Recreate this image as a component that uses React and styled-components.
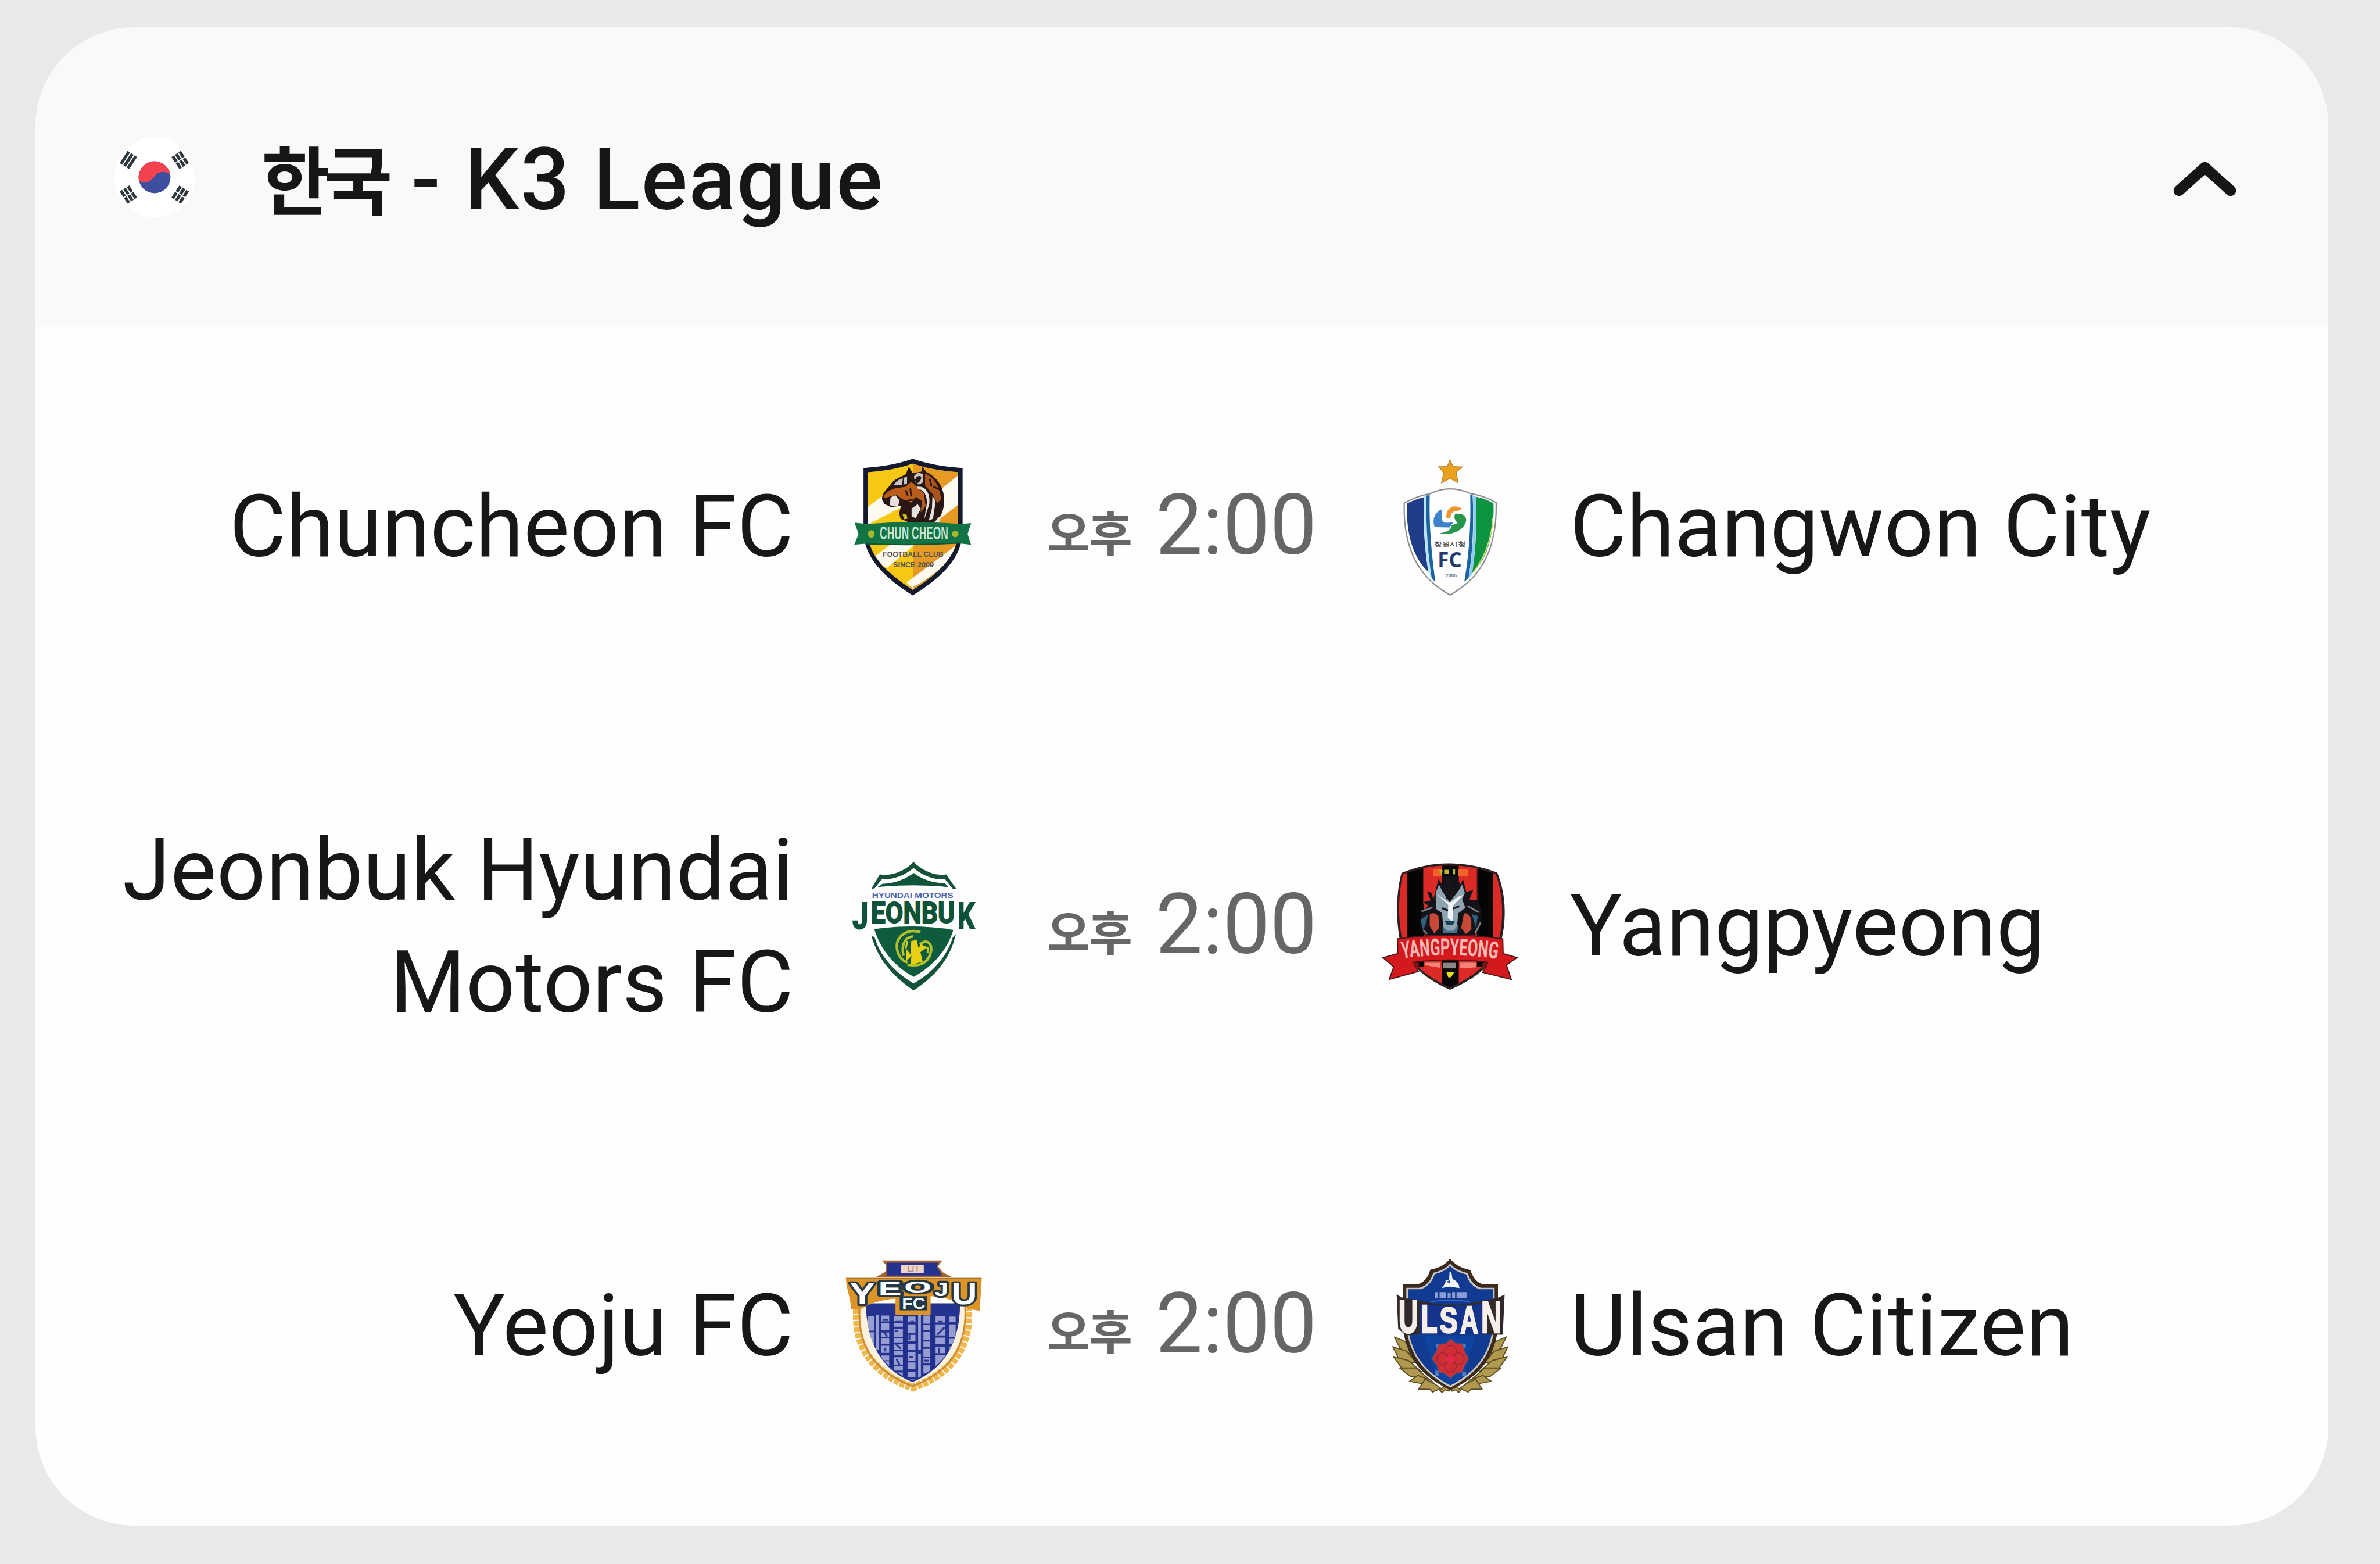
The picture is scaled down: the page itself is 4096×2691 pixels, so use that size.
import React from "react";
import styled, { createGlobalStyle } from "styled-components";

const GlobalStyle = createGlobalStyle`
  * {
    box-sizing: border-box;
  }
  body {
    margin: 0;
    background: #e9e9ea;
  }
`;

const Page = styled.main`
  width: 4096px;
  height: 2691px;
  padding: 47px 89px 66px 61px;
  background: #e9e9ea;
  font-family: Roboto, "Noto Sans CJK KR", sans-serif;
`;

const Card = styled.section`
  display: flex;
  flex-direction: column;
  height: 100%;
  border-radius: 170px;
  background: #fefefe;
  overflow: hidden;
`;

const CardHeader = styled.header`
  display: flex;
  align-items: center;
  flex: none;
  height: 516px;
  padding: 0 155px 0 136px;
  background: #f9f9fa;
`;

const Flag = styled.svg`
  flex: none;
  width: 138px;
  height: 138px;
`;

const LeagueTitle = styled.h1`
  flex: 1;
  display: flex;
  align-items: baseline;
  margin: 0 0 0 115px;
  padding-top: 4px;
  font-size: 149px;
  font-weight: 500;
  line-height: 180px;
  letter-spacing: 2px;
  color: #161616;
  white-space: pre;
`;

const Country = styled.span`
  margin-right: 3px;
  font-family: "Noto Sans CJK KR", sans-serif;
  font-size: 128px;
  font-weight: 700;
  letter-spacing: -10px;
`;

const Chevron = styled.svg`
  flex: none;
  width: 115px;
  height: 74px;
`;

const MatchList = styled.div`
  flex: 1;
  display: grid;
  grid-template-rows: repeat(3, 1fr);
`;

const MatchRow = styled.div`
  display: grid;
  grid-template-columns: 1fr 240px 684px 240px 1fr;
  align-items: center;
`;

const TeamName = styled.div`
  padding: 0 86px;
  font-size: 149px;
  line-height: 193px;
  letter-spacing: 0.4px;
  text-align: ${(props) => props.$align};
  color: #191616;
  white-space: pre-line;
`;

const Crest = styled.svg`
  display: block;
  width: 240px;
  height: 240px;
  overflow: visible;
`;

const Kickoff = styled.div`
  display: flex;
  align-items: baseline;
  justify-content: center;
  padding-top: 8px;
  font-size: 144px;
  line-height: 180px;
  color: #666668;
`;

const Meridiem = styled.span`
  margin-right: 42px;
  font-family: "Noto Sans CJK KR", sans-serif;
  font-size: 81px;
  font-weight: 700;
  letter-spacing: -2px;
  transform: translateY(-5px);
`;

const CrestText = styled.text`
  font-family: ${(props) => props.$font || '"Liberation Sans"'}, sans-serif;
  font-weight: 700;
`;

const Word = ({ width, ...props }) => (
  <CrestText textLength={width} lengthAdjust="spacingAndGlyphs" {...props} />
);

const Trigram = ({ x, y, angle, broken }) => (
  <g transform={`translate(${x} ${y}) rotate(${angle})`} stroke="#30383c" strokeWidth="5.4">
    <path d="M-13 -7.5H13M-13 0H13M-13 7.5H13" />
    {broken && <path d="M0 -11V11" stroke="#fff" strokeWidth="2" />}
  </g>
);

const KoreaFlag = () => (
  <Flag viewBox="-72 -72 144 144">
    <circle r="72" fill="#fff" />
    <circle r="28.6" fill="#3f4f9f" />
    <path d="M-28 6A28.6 28.6 0 1 1 28.4 -3C22 -12 8 -12 0 -2C-7 9 -18 13 -28 6Z" fill="#f5424f" />
    <Trigram x={-47} y={-31} angle={-57} />
    <Trigram x={46} y={-31} angle={57} broken />
    <Trigram x={-47} y={31} angle={57} broken />
    <Trigram x={46} y={31} angle={-57} broken />
  </Flag>
);

const ChuncheonCrest = () => (
  <Crest viewBox="64.7 73 754.5 754.5">
    <path d="M172 130Q330 120 438 80Q550 120 708 130V470C708 625 575 735 438 820C305 735 172 625 172 470Z" fill="#131a2e" />
    <clipPath id="chuncheon">
      <path d="M194 153Q340 143 438 106Q540 143 684 153V470C684 612 560 712 438 790C320 712 194 612 194 470Z" />
    </clipPath>
    <g clipPath="url(#chuncheon)">
      <path d="M190 90H690V800H190Z" fill="#f6c813" />
      <path d="M440 90H690V800H440Z" fill="#e69a22" />
      <path d="M190 345L270 285L400 330L190 440ZM560 270L690 165V325L540 440Z" fill="#fffaf0" />
      <path d="M190 640L330 535H460L300 670ZM405 750L690 535V600L440 785Z" fill="#fffaf0" />
      <path d="M205 560C235 650 330 725 435 785" stroke="#efb21c" strokeWidth="14" fill="none" />
      <path d="M684 545C650 650 560 725 445 780" stroke="#d99a35" strokeWidth="16" fill="none" />
    </g>
    <path d="M272 300C272 255 310 240 325 210C350 182 390 175 402 160L417 124L438 158L485 150L490 124L512 152C575 180 612 245 608 310C606 375 580 420 540 426H420L372 405L365 375L375 335L320 342L285 325Z" fill="#2a1713" />
    <path d="M280 295C285 262 315 250 345 240L400 232L430 205L462 232L498 268L508 335L480 372L490 310L455 285L430 318L385 300L350 275Z" fill="#b95e1a" />
    <path d="M505 160C555 180 585 230 592 300L570 320L545 270L505 225Z" fill="#a8541c" />
    <path d="M335 225Q350 195 385 185L380 222ZM388 220L392 182L408 176L407 216ZM445 175Q465 145 495 165L492 210L470 220Q445 205 445 175Z" fill="#c9c4c4" />
    <path d="M318 290L345 277L366 305L360 336L315 332ZM432 350L465 326L482 350L455 402L432 392ZM462 232C505 225 535 265 528 325L500 410L515 320C515 270 495 250 462 240ZM545 280L562 310L548 405L525 415L542 350ZM575 400L592 386L584 425H555Z" fill="#e6e0de" />
    <path d="M455 195Q465 172 480 180Q478 200 462 208ZM400 250L412 280M425 240L430 285M530 190L540 230M550 230L590 250M400 310L440 300" stroke="#2a1713" strokeWidth="9" fill="#2a1713" />
    <path d="M382 378L405 382L410 405L392 408Z" fill="#c7b51c" />
    <path d="M124 426L190 434Q440 412 700 434L754 428L735 487L754 545L690 538Q440 550 180 540L122 545L145 487Z" fill="#127445" />
    <path d="M185 540Q440 552 695 536" stroke="#0c5635" strokeWidth="6" fill="none" />
    <ellipse cx="214" cy="487" rx="18" ry="20" fill="#a9b92b" />
    <ellipse cx="668" cy="487" rx="18" ry="18" fill="#a9b92b" />
    <Word x="260" y="516" width={370} fontSize="96" fill="#c6e3d3">CHUN CHEON</Word>
    <Word x="276" y="612" width={328} fontSize="40" fill="#50525c">FOOTBALL CLUB</Word>
    <Word x="332" y="666" width={220} fontSize="40" fill="#50525c">SINCE 2009</Word>
  </Crest>
);

const ChangwonCrest = () => (
  <Crest viewBox="29 73 754.5 754.5">
    <path d="M405 86L421 122L471 124L438 153L448 210L405 187L358 211L371 156L342 123L390 122Z" fill="#e9a11f" stroke="#b9803a" strokeWidth="4" />
    <path d="M157 320Q230 280 295 270Q350 243 405 243Q460 243 520 270Q590 280 654 318C660 560 580 720 405 817C230 720 150 560 157 320Z" fill="#fff" stroke="#8c8c90" strokeWidth="7" />
    <path d="M172 322Q215 300 262 288C260 470 270 590 290 694C205 620 165 480 172 322Z" fill="#1f3d86" />
    <path d="M262 285L278 278C272 470 292 620 310 736L290 705C268 590 260 450 262 285Z" fill="#b9e3f7" />
    <path d="M276 278H295C290 450 308 620 326 748L306 728C286 600 274 450 276 278Z" fill="#1d63a0" />
    <path d="M514 275L527 277C535 450 525 600 505 728L482 744C508 600 518 440 514 275Z" fill="#1d63a0" />
    <path d="M527 277L545 284C550 450 542 590 524 706L504 728C528 590 536 450 527 277Z" fill="#8fcdf0" />
    <path d="M545 286Q600 296 640 322C645 480 610 620 524 700C545 580 550 440 545 286Z" fill="#0d9440" />
    <path d="M636 400C632 510 590 620 530 696" stroke="#d9dc6a" strokeWidth="6" fill="none" />
    <path d="M358 354C325 370 305 405 322 450L402 452L424 422Q370 435 362 412Z" fill="#3c83c9" />
    <path d="M385 400C380 350 420 320 468 350L466 357L425 366Q402 380 408 402Z" fill="#ee9730" />
    <path d="M432 378C490 372 505 410 482 440C455 480 400 495 350 483C400 478 420 450 412 440L446 428Q420 405 432 378Z" fill="#26964a" />
    <Word x="318" y="554" width={172} fontSize="34" fill="#555">창원시청</Word>
    <Word x="338" y="668" width={130} fontSize="114" fill="#26396d" $font="Open Sans">FC</Word>
    <Word x="380" y="722" width={62} fontSize="26" fill="#777">2005</Word>
  </Crest>
);

const JeonbukCrest = () => (
  <Crest viewBox="64.7 44 754.5 754.5">
    <path d="M214 218L260 140C330 150 395 120 443 72C490 120 560 150 620 140L673 218H655L612 165C550 170 490 145 443 105C395 145 330 170 272 165L232 215Z" fill="#145239" />
    <path d="M248 208L276 190C340 190 400 165 443 132C486 165 550 188 610 186L632 208Q440 190 248 208Z" fill="#0e5438" />
    <path d="M214 470C250 600 330 690 443 768C560 690 640 600 672 462L655 480C620 590 545 670 443 730C345 670 265 590 232 480Z" fill="#145239" />
    <path d="M230 436Q440 405 658 440C620 560 540 640 443 694C345 640 270 560 230 436Z" fill="#0f5b3e" />
    <Word x="218" y="268" width={440} fontSize="40" fill="#4762ac">HYUNDAI MOTORS</Word>
    <g fill="#0e5239" stroke="#0e5239" strokeWidth="6">
      <Word x="112" y="434" width={86} fontSize="198" $font="Roboto">J</Word>
      <Word x="212" y="403" width={454} fontSize="156" $font="Roboto">EONBU</Word>
      <Word x="680" y="434" width={94} fontSize="198" $font="Roboto">K</Word>
    </g>
    <g fill="none" stroke="#b3bf2b" strokeWidth="14">
      <path d="M480 452C400 430 350 480 352 530C354 580 385 610 410 616" />
      <path d="M440 475C395 480 375 520 388 580M478 520C515 480 548 520 536 560C525 615 480 640 410 628" />
    </g>
    <path d="M430 500L460 495L470 540L482 515L512 535L480 560L492 612L425 630L432 580L400 612L405 545L428 575Z" fill="#e6cf14" />
    <path d="M500 530L522 540L518 565M410 500L400 540" stroke="#c3c728" strokeWidth="10" fill="none" />
  </Crest>
);

const YangpyeongCrest = () => (
  <Crest viewBox="59 44 754.5 754.5">
    <path d="M172 132Q300 78 436 80Q570 82 690 130C745 260 740 420 700 540C640 650 560 710 434 764C310 710 230 640 172 540C140 400 140 250 172 132Z" fill="#2b2022" />
    <clipPath id="yangpyeong">
      <path d="M180 140Q300 90 436 92Q570 92 682 140C728 260 725 410 690 530C630 640 550 700 434 750C320 700 240 640 184 530C152 400 152 260 180 140Z" />
    </clipPath>
    <g clipPath="url(#yangpyeong)">
      <path d="M140 80H740V760H140Z" fill="#dc2a27" />
      <path d="M204 80H292V640H204ZM390 80H482V760H390ZM580 80H668V640H580Z" fill="#060506" />
      <path d="M292 80V300M580 80V300" stroke="#8e2320" strokeWidth="6" />
    </g>
    <path d="M345 112H390V148H345ZM480 112H532V148H480Z" fill="#f0642a" />
    <path d="M375 112L395 118L390 145ZM403 115H430V138H403ZM450 112H462V140H450Z" fill="#bdb52b" />
    <path d="M310 230L335 240L345 275L372 165L395 200L400 148H470L490 195L505 165L522 235L560 225L540 275L585 280C610 330 610 400 590 440L570 470H300L275 430C270 380 280 330 320 310L290 290L330 280Z" fill="#141319" />
    <path d="M325 355Q350 340 372 365L375 430L350 460L325 420ZM510 350Q545 350 550 390V440L520 462L495 430Z" fill="#c74a38" />
    <path d="M275 385L315 355L308 395L290 440ZM553 355L585 365L575 430Z" fill="#2f617f" />
    <path d="M357 240L375 195L395 235L432 290L480 230L500 195L515 240L500 275L518 320L480 350L470 440L452 452H415L398 435L392 350L358 325Z" fill="#8fa3b0" />
    <path d="M357 240L425 305L422 375L448 395L450 310L508 250L480 260L440 290L425 290L385 262Z" fill="#f1f5f8" />
    <path d="M392 322L424 335M450 325L485 312M430 170V280M412 215L418 270M450 215L446 270" stroke="#17171c" strokeWidth="10" />
    <path d="M405 390H462L450 415H418Z" fill="#12435c" />
    <path d="M395 420L420 445H455L482 405L472 458H395Z" fill="#496f8c" />
    <path d="M280 340L340 318M530 310L590 345M290 440L310 462M570 460L600 400" stroke="#7d7f84" strokeWidth="9" />
    <path d="M300 618H382V645L300 630ZM490 618H575V642L490 648Z" fill="#f48477" />
    <path d="M398 618H465V648H398Z" fill="#8b8585" />
    <path d="M415 668H458L440 696H425Z" fill="#e5dd20" />
    <path d="M150 488Q435 450 720 488L722 568L798 590L740 630L766 708L612 670L640 615Q435 590 234 615L264 665L106 708L130 640L72 590L152 568Z" fill="#d3191e" stroke="#481719" strokeWidth="6" />
    <path d="M232 612L268 620L262 662M636 612L606 622L612 666" fill="#7c1517" />
    <path id="yangpyeongArc" d="M176 594Q435 558 694 598" fill="none" />
    <CrestText fontSize="128" fill="#fbb9b5" $font="Roboto">
      <textPath href="#yangpyeongArc" textLength="517" lengthAdjust="spacingAndGlyphs">YANGPYEONG</textPath>
    </CrestText>
  </Crest>
);

const YeojuCrest = () => (
  <Crest viewBox="64.7 44 754.5 754.5">
    <path d="M125 300C115 560 240 700 437 765C640 700 760 560 745 300Z" fill="#fdf3dc" />
    <path d="M137 330C120 560 250 690 437 756C625 690 752 560 738 330" fill="none" stroke="#efb64a" strokeWidth="42" strokeDasharray="26 7" />
    <path d="M150 320C135 560 260 680 437 748C615 680 735 560 722 320" fill="none" stroke="#c8893a" strokeWidth="9" />
    <path d="M184 300C190 520 270 660 437 726C600 660 695 520 694 300Z" fill="#23338f" />
    <clipPath id="yeoju">
      <path d="M190 360C195 520 275 650 437 718C595 650 688 520 688 360Z" />
    </clipPath>
    {/* hunminjeongeum columns */}
    <g clipPath="url(#yeoju)" fill="none" stroke="#979dd0">
      <path d="M213 368V720" strokeWidth="34" strokeDasharray="80 9" />
      <path d="M247 365V550M475 365V550M475 575V720" strokeWidth="15" />
      <path d="M290 366V720" strokeWidth="42" strokeDasharray="32 8 38 14 26 6" />
      <path d="M360 370V720" strokeWidth="50" strokeDasharray="28 9 20 13 42 6 24 10" />
      <path d="M433 372V720" strokeWidth="40" strokeDasharray="30 12 48 9 34 16" />
      <path d="M513 366V720" strokeWidth="34" strokeDasharray="44 7 28 11" />
      <path d="M588 370V720" strokeWidth="52" strokeDasharray="34 10 60 12 36 14" />
      <path d="M652 372V720" strokeWidth="36" strokeDasharray="30 12 70 8" />
      <path d="M275 390H305M345 400H378M420 470V500M345 520L375 545M570 470L610 430M580 540V570M500 610H525M280 450L300 480M340 450H360M425 400H445M350 600L370 640M420 590H440M290 540V560M575 400H600" stroke="#2c3a94" strokeWidth="10" />
      <path d="M323 360V720M394 360V720M548 360V720" stroke="#1f2e8a" strokeWidth="14" />
    </g>
    <path d="M240 158L290 130L295 95L272 68H598L575 100L600 132L650 158Z" fill="#a4622f" />
    <path d="M296 150L300 80H575L570 105L598 150Z" fill="#24338f" />
    <path d="M376 92H498V138H376Z" fill="#efd3c4" />
    <path d="M414 100V128H440V100M462 98V128" stroke="#a98c8c" strokeWidth="6" fill="none" />
    <path d="M76 163H812L800 340L735 330C700 290 620 270 535 262V362H345V275C270 280 205 300 150 335L105 330L100 290L80 200Z" fill="#dd9426" />
    <path d="M80 166H808" stroke="#a87436" strokeWidth="7" />
    <g fill="#fff" stroke="#263846" strokeWidth="20" strokeLinejoin="round" paintOrder="stroke">
      <Word x="98" y="304" width={136} fontSize="162">Y</Word>
      <Word x="252" y="256" width={126} fontSize="98">E</Word>
      <Word x="392" y="242" width={148} fontSize="84">O</Word>
      <Word x="556" y="260" width={74} fontSize="102">J</Word>
      <Word x="648" y="304" width={138} fontSize="162">U</Word>
    </g>
    <path d="M368 262H516V338H368Z" fill="#22384a" />
    <Word x="380" y="330" width={126} fontSize="88" fill="#f5f7f8">FC</Word>
  </Crest>
);

const Laurel = ({ flip }) => (
  <g transform={flip ? "translate(813 0) scale(-1 1)" : undefined} fill="#b09a50" stroke="#5d4e24" strokeWidth="6" strokeLinejoin="round">
    <path d="M104 482L180 515L205 580L135 545Z" />
    <path d="M95 535L170 560L225 625L130 605Z" />
    <path d="M98 588L180 610L250 670L150 660Z" />
    <path d="M132 650L220 650L290 710L190 695Z" />
    <path d="M185 722L230 690L300 715L330 745L240 732Z" />
    <path d="M235 764L270 710L320 735L355 760L310 780L295 765Z" />
    <path d="M350 772L370 752H408L400 775L378 768L362 782Z" />
  </g>
);

const UlsanCrest = () => (
  <Crest viewBox="29 44 754.5 754.5">
    <Laurel />
    <Laurel flip />
    <path d="M150 198H225Q280 185 298 118Q370 105 405 58Q440 105 515 120Q535 185 585 198H664V440C640 600 570 690 407 770C245 690 175 600 150 440Z" fill="#3c2a1d" />
    <path d="M168 216H240Q295 200 314 135Q375 122 405 86Q436 122 500 137Q520 200 572 216H646V440C620 590 550 680 407 756C265 680 195 590 168 440Z" fill="#c9c5bd" />
    <path d="M178 224H245Q300 208 322 142Q375 130 405 98Q434 130 492 144Q512 208 565 224H636V440C612 585 545 670 407 744C270 670 202 585 178 440Z" fill="#113a92" />
    <path d="M260 475H540L480 690L407 742L330 690Z" fill="#0e43a0" />
    <path d="M402 132H412L418 168Q455 185 456 218L400 210L358 218Q385 190 380 178L400 172Z" fill="#f3f3f6" />
    <path d="M380 184L402 176L408 190Z" fill="#14409a" />
    <path d="M323 240H340V272H323ZM348 240H384V272H348ZM392 244H408V270H392ZM416 240H432V272H416ZM440 240H494V272H440Z" fill="#8a9cd6" />
    <path d="M300 290Q405 278 512 290" stroke="#4a6cba" strokeWidth="6" fill="none" />
    <path d="M116 250L140 268L235 285Q405 330 590 285L670 268L700 252L690 470H620Q405 450 165 474L124 436Z" fill="#302a2b" />
    <path d="M240 300Q405 330 580 300V466H240Z" fill="#14338a" />
    <g fill="#f7eee9" stroke="#f7eee9" strokeWidth="8">
      <Word x="126" y="459" width={108} fontSize="252">U</Word>
      <Word x="248" y="460" width={88} fontSize="216">L</Word>
      <Word x="348" y="458" width={98} fontSize="196">S</Word>
      <Word x="460" y="462" width={98} fontSize="208">A</Word>
      <Word x="572" y="460" width={112} fontSize="246">N</Word>
    </g>
    <path d="M328 520H350V542H328ZM465 520H490V542H465ZM325 665H345V692H325ZM470 672H492V692H470Z" fill="#4f79c4" />
    <path d="M407 495L440 520L470 520L482 560L505 600L480 640L470 670L435 678L407 704L375 678L345 670L335 635L308 600L332 560L345 522L380 520Z" fill="#cf2e35" stroke="#8a4a55" strokeWidth="5" />
    <g fill="none" stroke="#a32638" strokeWidth="5">
      <circle cx="407" cy="560" r="32" />
      <circle cx="365" cy="600" r="32" />
      <circle cx="449" cy="600" r="32" />
      <circle cx="407" cy="640" r="32" />
    </g>
    <circle cx="407" cy="602" r="22" fill="#e8264c" />
  </Crest>
);

const matches = [
  {
    home: "Chuncheon FC",
    HomeCrest: ChuncheonCrest,
    away: "Changwon City",
    AwayCrest: ChangwonCrest,
    time: "2:00",
  },
  {
    home: "Jeonbuk Hyundai\nMotors FC",
    HomeCrest: JeonbukCrest,
    away: "Yangpyeong",
    AwayCrest: YangpyeongCrest,
    time: "2:00",
  },
  {
    home: "Yeoju FC",
    HomeCrest: YeojuCrest,
    away: "Ulsan Citizen",
    AwayCrest: UlsanCrest,
    time: "2:00",
  },
];

const App = () => {
  return (
    <>
      <GlobalStyle />
      <Page>
        <Card>
          <CardHeader>
            <KoreaFlag />
            <LeagueTitle>
              <Country>한국</Country> - K3 League
            </LeagueTitle>
            <Chevron viewBox="0 -4 115 74">
              <path d="M13 56L57.5 16L102 56" fill="none" stroke="#161616" strokeWidth="18.5" strokeLinecap="round" strokeLinejoin="round" />
            </Chevron>
          </CardHeader>
          <MatchList>
            {matches.map(({ home, HomeCrest, away, AwayCrest, time }) => (
              <MatchRow key={home}>
                <TeamName $align="right">{home}</TeamName>
                <HomeCrest />
                <Kickoff>
                  <Meridiem>오후</Meridiem>
                  {time}
                </Kickoff>
                <AwayCrest />
                <TeamName $align="left">{away}</TeamName>
              </MatchRow>
            ))}
          </MatchList>
        </Card>
      </Page>
    </>
  );
};

export default App;
